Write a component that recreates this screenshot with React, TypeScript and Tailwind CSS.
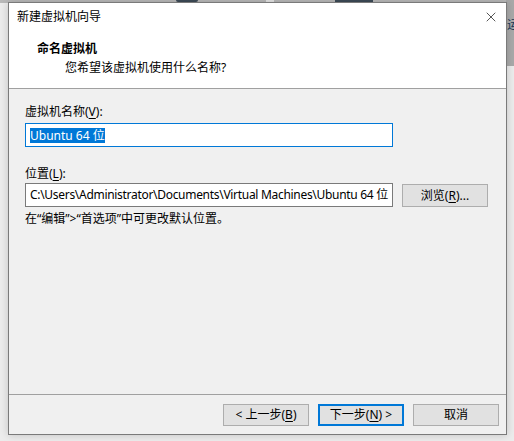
import { X } from "lucide-react";

const FONT = { fontFamily: '"Noto Sans", "Noto Sans CJK SC", sans-serif' };

function Key({ k }: { k: string }) {
  return <span className="underline underline-offset-2">{k}</span>;
}

function WinButton({
  children,
  primary,
  className,
}: {
  children: React.ReactNode;
  primary?: boolean;
  className?: string;
}) {
  return (
    <button
      type="button"
      className={
        "flex h-[22px] w-[86px] items-center justify-center bg-[#e1e1e1] text-[12px] leading-4 text-black " +
        (primary ? "border-2 border-[#0078d7] " : "border border-[#adadad] ") +
        (className ?? "")
      }
    >
      {children}
    </button>
  );
}

export default function App() {
  return (
    <div className="relative h-[441px] w-[514px] overflow-hidden bg-[#ececec]" style={FONT}>
      {/* desktop behind the dialog */}
      <div className="absolute left-0 top-0 h-[3px] w-[514px] bg-[#b9b9b9]" />
      <div className="absolute left-[176px] top-0 h-[2px] w-[22px] rounded-b-full bg-[#3d4b57]" />
      <div className="absolute left-[266px] top-0 h-[2px] w-[8px] bg-[#e4e4e4]" />
      <div className="absolute left-[335px] top-0 h-[2px] w-[38px] border-x-2 border-b-2 border-[#3d4b57]" />
      <div className="absolute left-[506px] top-0 h-[66px] w-[8px] bg-[#a9a9a9]" />
      <div className="absolute left-[507px] top-[17px] text-[12px] leading-4 text-[#1a3a5a]">运</div>

      {/* dialog window */}
      <div className="absolute left-[8px] top-[2px] flex h-[433px] w-[499px] flex-col border border-[#7a7a7a] bg-[#f0f0f0] shadow-[0_0_8px_rgba(0,0,0,0.18)]">
        <div className="flex h-[86px] flex-col border-b border-[#a0a0a0] bg-white">
          <div className="flex h-[28px] items-center justify-between pl-[8px] pr-[7px]">
            <span className="text-[12px] leading-4 text-black">新建虚拟机向导</span>
            <X className="h-[16px] w-[16px] text-black" strokeWidth={1} />
          </div>
          <div className="pl-[28px] pt-[10px] text-[12px] font-bold leading-4 text-black">命名虚拟机</div>
          <div className="mt-[3px] pl-[56px] text-[12px] leading-4 text-black">您希望该虚拟机使用什么名称?</div>
        </div>

        <div className="flex flex-1 flex-col px-[16px] pt-[15px]">
          <div className="text-[12px] leading-4 text-black">
            虚拟机名称(<Key k="V" />):
          </div>
          <div className="mt-[3px] flex h-[24px] w-[368px] items-center border border-[#0078d7] bg-white pl-[4px]">
            <span className="bg-[#0078d7] text-[12px] leading-[15px] text-white">Ubuntu 64 位</span>
          </div>

          <div className="mt-[19px] text-[12px] leading-4 text-black">
            位置(<Key k="L" />):
          </div>
          <div className="mt-px flex items-start gap-[9px]">
            <div className="flex h-[24px] w-[368px] items-center overflow-hidden whitespace-nowrap border border-[#7a7a7a] bg-white pl-[4px] text-[12px] leading-4 tracking-[-0.3px] text-black">
              C:\Users\Administrator\Documents\Virtual Machines\Ubuntu 64 位
            </div>
            <button
              type="button"
              className="mt-px flex h-[23px] w-[86px] items-center justify-center border border-[#adadad] bg-[#e1e1e1] text-[12px] leading-4 text-black"
            >
              浏览(<Key k="R" />)...
            </button>
          </div>
          <div className="mt-[4px] text-[12px] leading-4 text-black">{"在“编辑”>“首选项”中可更改默认位置。"}</div>
        </div>

        <div className="flex h-[40px] justify-end gap-[9px] border-t border-[#a0a0a0] pr-[7px] pt-[9px]">
          <WinButton>
            &lt; 上一步(<Key k="B" />)
          </WinButton>
          <WinButton primary>
            下一步(<Key k="N" />) &gt;
          </WinButton>
          <WinButton>取消</WinButton>
        </div>
      </div>
    </div>
  );
}
